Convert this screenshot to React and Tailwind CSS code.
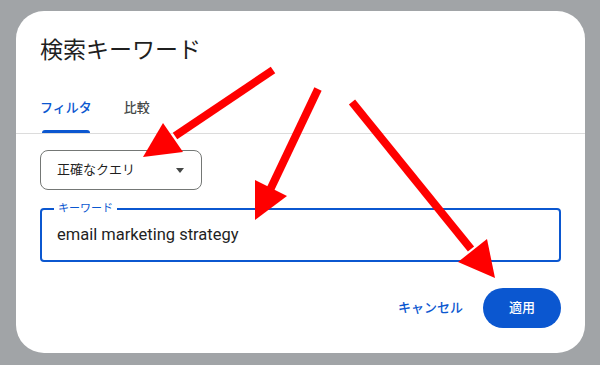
import React from 'react'

const font = { fontFamily: 'Roboto, "Noto Sans CJK JP", sans-serif' }

function Arrow({ tail, base, head }) {
  return (
    <g fill="#ff0000" stroke="none">
      <line x1={tail[0]} y1={tail[1]} x2={base[0]} y2={base[1]} stroke="#ff0000" strokeWidth="8" />
      <polygon points={head.map((p) => p.join(',')).join(' ')} />
    </g>
  )
}

export default function App() {
  return (
    <div className="relative w-[600px] h-[365px] bg-[#a1a4a7] pt-[11px] pl-4 overflow-hidden" style={font}>
      <div className="w-[569px] h-[342px] bg-white rounded-[28px] pt-6 flex flex-col">
        <h1 className="px-6 text-[23px] leading-8 text-[#1f1f1f] font-normal">検索キーワード</h1>

        <div className="mt-[18px] px-6 flex gap-[32px] h-12">
          <div className="flex flex-col">
            <div className="flex-1 flex items-center text-[13px] font-medium text-[#0b57d0]">フィルタ</div>
            <div className="h-[3px] mx-[2px] rounded-t-full bg-[#0b57d0]" />
          </div>
          <div className="flex flex-col">
            <div className="flex-1 flex items-center text-[13px] font-medium text-[#444746]">比較</div>
            <div className="h-[3px]" />
          </div>
        </div>
        <div className="h-px bg-[#dcdcdc]" />

        <div className="px-6 pt-4">
          <div className="w-[162px] h-10 border border-[#747775] rounded-lg flex items-center justify-between pl-4 pr-[17px]">
            <span className="text-[13px] text-[#1f1f1f]">正確なクエリ</span>
            <span className="w-0 h-0 border-l-[4px] border-r-[4px] border-t-[5px] border-l-transparent border-r-transparent border-t-[#444746]" />
          </div>

          <div className="relative mt-[18px] h-[54px] border-2 border-[#0b57d0] rounded-[4px] flex items-center pl-[15px]">
            <span className="absolute left-3 -top-[9px] px-1 bg-white text-[11px] leading-4 text-[#0b57d0]">キーワード</span>
            <span className="text-[16.5px] text-[#1f1f1f]">email marketing strategy</span>
          </div>

          <div className="mt-[26px] flex justify-end items-center gap-5">
            <button className="text-[13px] font-medium text-[#0b57d0]">キャンセル</button>
            <button className="w-[78px] h-10 rounded-full bg-[#0b57d0] text-white text-[13px] font-medium">適用</button>
          </div>
        </div>
      </div>

      <svg className="absolute inset-0 pointer-events-none" width="600" height="365" viewBox="0 0 600 365">
        <Arrow tail={[273, 70]} base={[175, 136]} head={[[143, 157], [163, 123], [183, 152]]} />
        <Arrow tail={[318, 89]} base={[270, 190]} head={[[255, 220], [255, 180], [287, 196]]} />
        <Arrow tail={[352, 102]} base={[471, 249]} head={[[495, 278], [458, 262], [487, 239]]} />
      </svg>
    </div>
  )
}
